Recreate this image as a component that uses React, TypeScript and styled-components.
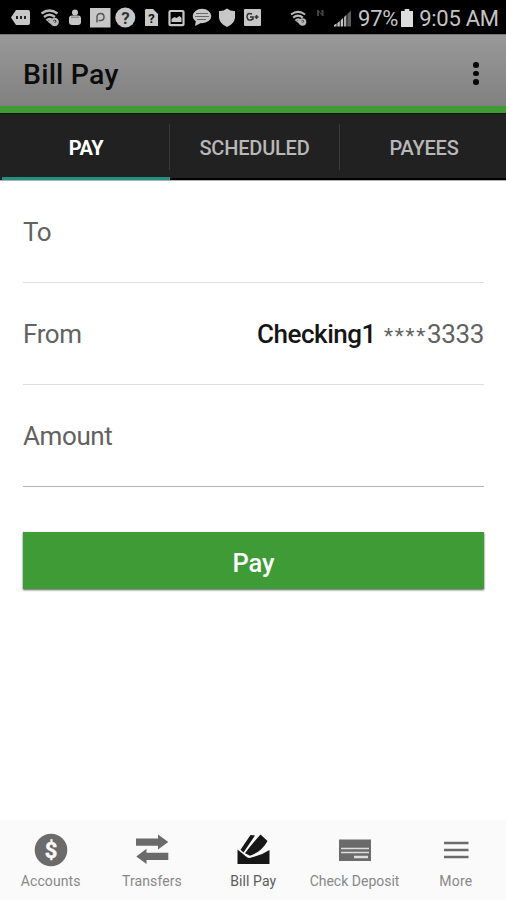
import React from "react";
import styled, { createGlobalStyle } from "styled-components";

const GlobalStyle = createGlobalStyle`
  *, *::before, *::after { box-sizing: border-box; }
  body { margin: 0; background: #fff; font-family: Roboto, "Liberation Sans", sans-serif; }
  button { font-family: inherit; border: 0; padding: 0; background: none; }
`;

const Screen = styled.div`
  display: flex;
  flex-direction: column;
  width: 506px;
  height: 900px;
  overflow: hidden;
  background: #fff;
`;

const StatusBar = styled.div`
  display: flex;
  align-items: center;
  flex: none;
  height: 34px;
  background: #000;
  color: #c4c4c4;
`;

const StatusIcons = styled.svg`
  display: block;
  flex: none;
  width: 358px;
  height: 34px;
`;

const StatusText = styled.span<{ $spacing: number }>`
  font-size: 22px;
  line-height: 34px;
  margin-top: 3px;
  letter-spacing: ${(p) => p.$spacing}px;
  white-space: nowrap;
`;

const Battery = styled.svg`
  width: 12px;
  height: 18px;
  margin: 2px 6px 0 3px;
`;

const Header = styled.header`
  display: flex;
  align-items: center;
  justify-content: space-between;
  flex: none;
  height: 79px;
  padding: 6px 22px 0 23px;
  background: linear-gradient(#999, #808080);
  border-top: 1px solid #767676;
  border-bottom: 7px solid #3f9c35;
`;

const Title = styled.h1`
  margin: 0;
  padding-top: 3px;
  font-size: 28.5px;
  font-weight: 500;
  line-height: 40px;
  letter-spacing: 0.2px;
  color: #0c0c0c;
`;

const OverflowButton = styled.button`
  display: flex;
  flex-direction: column;
  align-items: center;
  gap: 3px;
  width: 16px;
`;

const Dot = styled.span`
  width: 5.6px;
  height: 5.6px;
  border-radius: 50%;
  background: #080808;
`;

const Tabs = styled.nav`
  display: grid;
  grid-template-columns: 170px 170px 166px;
  flex: none;
  height: 68px;
  background: #212121;
  border-top: 1px solid #151515;
  border-bottom: 1px solid #b0b0b0;
`;

const Tab = styled.button<{ $active?: boolean }>`
  display: flex;
  align-items: center;
  justify-content: center;
  height: 66px;
  padding: 2px 0 0 2px;
  font-size: 20px;
  font-weight: ${(p) => (p.$active ? 700 : 500)};
  letter-spacing: ${(p) => (p.$active ? -0.4 : -0.2)}px;
  color: ${(p) => (p.$active ? "#fff" : "#b8b8b8")};
  background:
    linear-gradient(${(p) => (p.$active ? "#249083, #249083" : "#000, #000")})
      ${(p) => (p.$active ? "2px" : "0")} 100% / 100% ${(p) => (p.$active ? 3 : 2)}px no-repeat,
    linear-gradient(#3a3a3a, #3a3a3a) 100% 10px / 1px 46px no-repeat;

  &:nth-child(2) {
    padding-right: 3px;
  }

  &:last-child {
    background: linear-gradient(#000, #000) 0 100% / 100% 2px no-repeat;
  }
`;

const Form = styled.main`
  flex: 1;
  padding: 0 22px 0 23px;
`;

const Field = styled.div<{ $strong?: boolean }>`
  display: flex;
  align-items: center;
  justify-content: space-between;
  height: 102px;
  padding-top: 1px;
  border-bottom: 1px solid ${(p) => (p.$strong ? "#b5b5b5" : "#dedede")};
`;

const Label = styled.span`
  font-size: 26px;
  line-height: 32px;
  letter-spacing: -0.4px;
  color: #626262;
`;

const Value = styled.span`
  display: flex;
  padding-top: 2px;
  font-size: 26px;
  line-height: 32px;
  letter-spacing: -0.35px;
  color: #626262;
`;

const AccountName = styled.span`
  margin-right: 8px;
  font-weight: 500;
  letter-spacing: -0.45px;
  color: #151515;
`;

const Mask = styled.span`
  padding-top: 2px;
  font-size: 21px;
  letter-spacing: 1.7px;
`;

const PayButton = styled.button`
  display: block;
  width: 461px;
  height: 57px;
  margin-top: 45px;
  padding-top: 5px;
  background: #3e9b35;
  box-shadow: 0 1px 2px #555;
  color: #fff;
  font-size: 25.5px;
  font-weight: 500;
`;

const BottomNav = styled.nav`
  display: grid;
  grid-template-columns: repeat(5, 101.3px);
  flex: none;
  height: 80px;
  background: #fafafa;
`;

const NavItem = styled.button<{ $active?: boolean }>`
  display: flex;
  flex-direction: column;
  align-items: center;
  padding-top: 12px;
  color: ${(p) => (p.$active ? "#171717" : "#6b6b6b")};
`;

const NavIcon = styled.svg`
  width: 36px;
  height: 36px;
`;

const NavLabel = styled.span<{ $active?: boolean; $spacing?: number }>`
  margin-top: 3px;
  font-size: 14px;
  line-height: 20px;
  letter-spacing: ${(p) => p.$spacing ?? 0}px;
  white-space: nowrap;
  color: ${(p) => (p.$active ? "#5c5c5c" : "#888")};
`;

const Glyph = styled.text`
  font-family: Roboto, sans-serif;
  font-weight: 700;
  text-anchor: middle;
`;

const Wifi = ({ x, y, scale = 1 }: { x: number; y: number; scale?: number }) => (
  <g transform={`translate(${x} ${y}) scale(${scale})`}>
    <g fill="none" stroke="#b9b9b9" strokeWidth="2.3">
      <path d="M0 4Q8-2 16 4" />
      <path d="M2.5 7.5Q8 3 13.5 7.5" />
      <path d="M5 11Q8 8 11 11" />
    </g>
    <path d="M6 12l3-2 2 6z" fill="#b9b9b9" />
    <circle cx="13.2" cy="12.5" r="4.2" fill="#b9b9b9" />
    <path d="M11.7 11.5q1.5-2 3 0l-1.5 2" fill="none" stroke="#333" />
  </g>
);

const StatusDrawing = () => (
  <StatusIcons viewBox="0 0 358 34" fill="#c7c7c7">
    <path d="M16 10h12q2 0 2 2v11q0 2-2 2H16l-5-7.5z" />
    <path d="M16 16h2v3h-2zm4 0h2v3h-2zm4 0h2v3h-2z" fill="#222" />
    <Wifi x={41.5} y={9.5} />
    <circle cx="75" cy="12.5" r="3" />
    <rect x="69" y="15.5" width="12" height="9.5" rx="3" />
    <path d="M71 17.2h8" stroke="#777" />
    <rect x="90" y="8" width="20.5" height="19.5" />
    <path d="M97 22.5v-5q0-4 3.5-4t3.5 3.5-3.5 3.5h-2" fill="none" stroke="#555" strokeWidth="1.5" />
    <circle cx="125.3" cy="17.5" r="10" />
    <Glyph x="125.5" y="23.5" fontSize="17" fill="#333">?</Glyph>
    <path d="M146 9h7l5 5v12h-13V10z" />
    <Glyph x="151.5" y="23" fontSize="13" fill="#111">?</Glyph>
    <rect x="169.5" y="11" width="14" height="14.2" rx="1" fill="none" stroke="#c7c7c7" strokeWidth="2.2" />
    <path d="M171.5 22v-3l3-2 2 1 3-2 2 2v4z" />
    <ellipse cx="202" cy="16" rx="9.3" ry="7.2" />
    <path d="M196 20l-1 6 8-4z" />
    <path d="M196 13.5h12M195 16.5h14M197 19.5h9" stroke="#666" />
    <path d="M227 8.5q4 3 8 2.5v7q-1 6-8 9-7-3-8-9v-7q4 .5 8-2.5z" />
    <rect x="244" y="9" width="17" height="17" rx="1" />
    <path d="M252 14q-5-2-5 3 1 5 6 2v-2h-3M254.5 17h4M256.5 15v4" fill="none" stroke="#333" strokeWidth="1.5" />
    <Wifi x={291} y={11} scale={0.88} />
    <path d="M317 16v-6h1.5l3 4v-4h2v6h-1.5l-3-4v4z" fill="#444" />
    <path d="M334 26.5v-1.5l2.6-1.5v3zm3.4-3.5l2.4-2v5.5h-2.4zm3.3-2.8l2.4-2.2v8.5h-2.4z" />
    <path d="M344 17l2.4-2.2v11.7H344z" fill="#aaa" />
    <path d="M347.3 14l3.7-3.5v16h-3.7z" fill="#5c5c5c" />
  </StatusIcons>
);

const navItems = [
  {
    label: "Accounts",
    spacing: 0.1,
    icon: (
      <>
        <circle cx="18" cy="18" r="16.3" fill="currentColor" />
        <Glyph x="18" y="25.6" fontSize="22" fill="#fafafa" stroke="#fafafa" strokeWidth="0.4">$</Glyph>
      </>
    ),
  },
  {
    label: "Transfers",
    spacing: 0.1,
    icon: <path fill="currentColor" d="M2 6.6h22V2.4L34.3 10 24 17.6V13.8H2zM34.3 20.8H12.5V16.8L2.3 24.5 12.5 32V28H34.3z" />,
  },
  {
    label: "Bill Pay",
    spacing: 0.1,
    active: true,
    icon: (
      <path
        fill="currentColor"
        d="M2.5 17.5L12 25.3Q14 26.5 17 25.3Q26 23.5 34.5 18V32H2.5zM15.5 3L20 3.5 8.5 20.5 5.5 17.8zM25.5 2.5L32.5 9Q27 19.5 15 23.8L10 21.3Q16 13 25.5 2.5z"
      />
    ),
  },
  {
    label: "Check Deposit",
    spacing: 0,
    icon: (
      <>
        <rect x="2" y="7.5" width="32" height="21.5" fill="currentColor" />
        <path d="M4 16.5h28M4 20.5h28" stroke="#ddd" strokeWidth="1.4" />
        <path d="M17 25h14" stroke="#ddd" strokeWidth="2.5" />
      </>
    ),
  },
  {
    label: "More",
    spacing: 0.2,
    icon: <path d="M6 11h24.5M6 18h24.5M6 25h24.5" stroke="currentColor" strokeWidth="2.5" />,
  },
];

export default function App() {
  return (
    <>
      <GlobalStyle />
      <Screen>
        <StatusBar>
          <StatusDrawing />
          <StatusText $spacing={-0.2}>97%</StatusText>
          <Battery viewBox="0 0 13 19" preserveAspectRatio="none">
            <path d="M4 0h5v2h4v17H0V2h4z" fill="#ddd" />
          </Battery>
          <StatusText $spacing={-0.3}>9:05 AM</StatusText>
        </StatusBar>
        <Header>
          <Title>Bill Pay</Title>
          <OverflowButton aria-label="More options">
            <Dot />
            <Dot />
            <Dot />
          </OverflowButton>
        </Header>
        <Tabs>
          <Tab $active>PAY</Tab>
          <Tab>SCHEDULED</Tab>
          <Tab>PAYEES</Tab>
        </Tabs>
        <Form>
          <Field>
            <Label>To</Label>
          </Field>
          <Field>
            <Label>From</Label>
            <Value>
              <AccountName>Checking1</AccountName>
              <Mask>****</Mask>
              3333
            </Value>
          </Field>
          <Field $strong>
            <Label>Amount</Label>
          </Field>
          <PayButton>Pay</PayButton>
        </Form>
        <BottomNav>
          {navItems.map((item) => (
            <NavItem key={item.label} $active={item.active}>
              <NavIcon viewBox="0 0 36 36">{item.icon}</NavIcon>
              <NavLabel $active={item.active} $spacing={item.spacing}>
                {item.label}
              </NavLabel>
            </NavItem>
          ))}
        </BottomNav>
      </Screen>
    </>
  );
}
